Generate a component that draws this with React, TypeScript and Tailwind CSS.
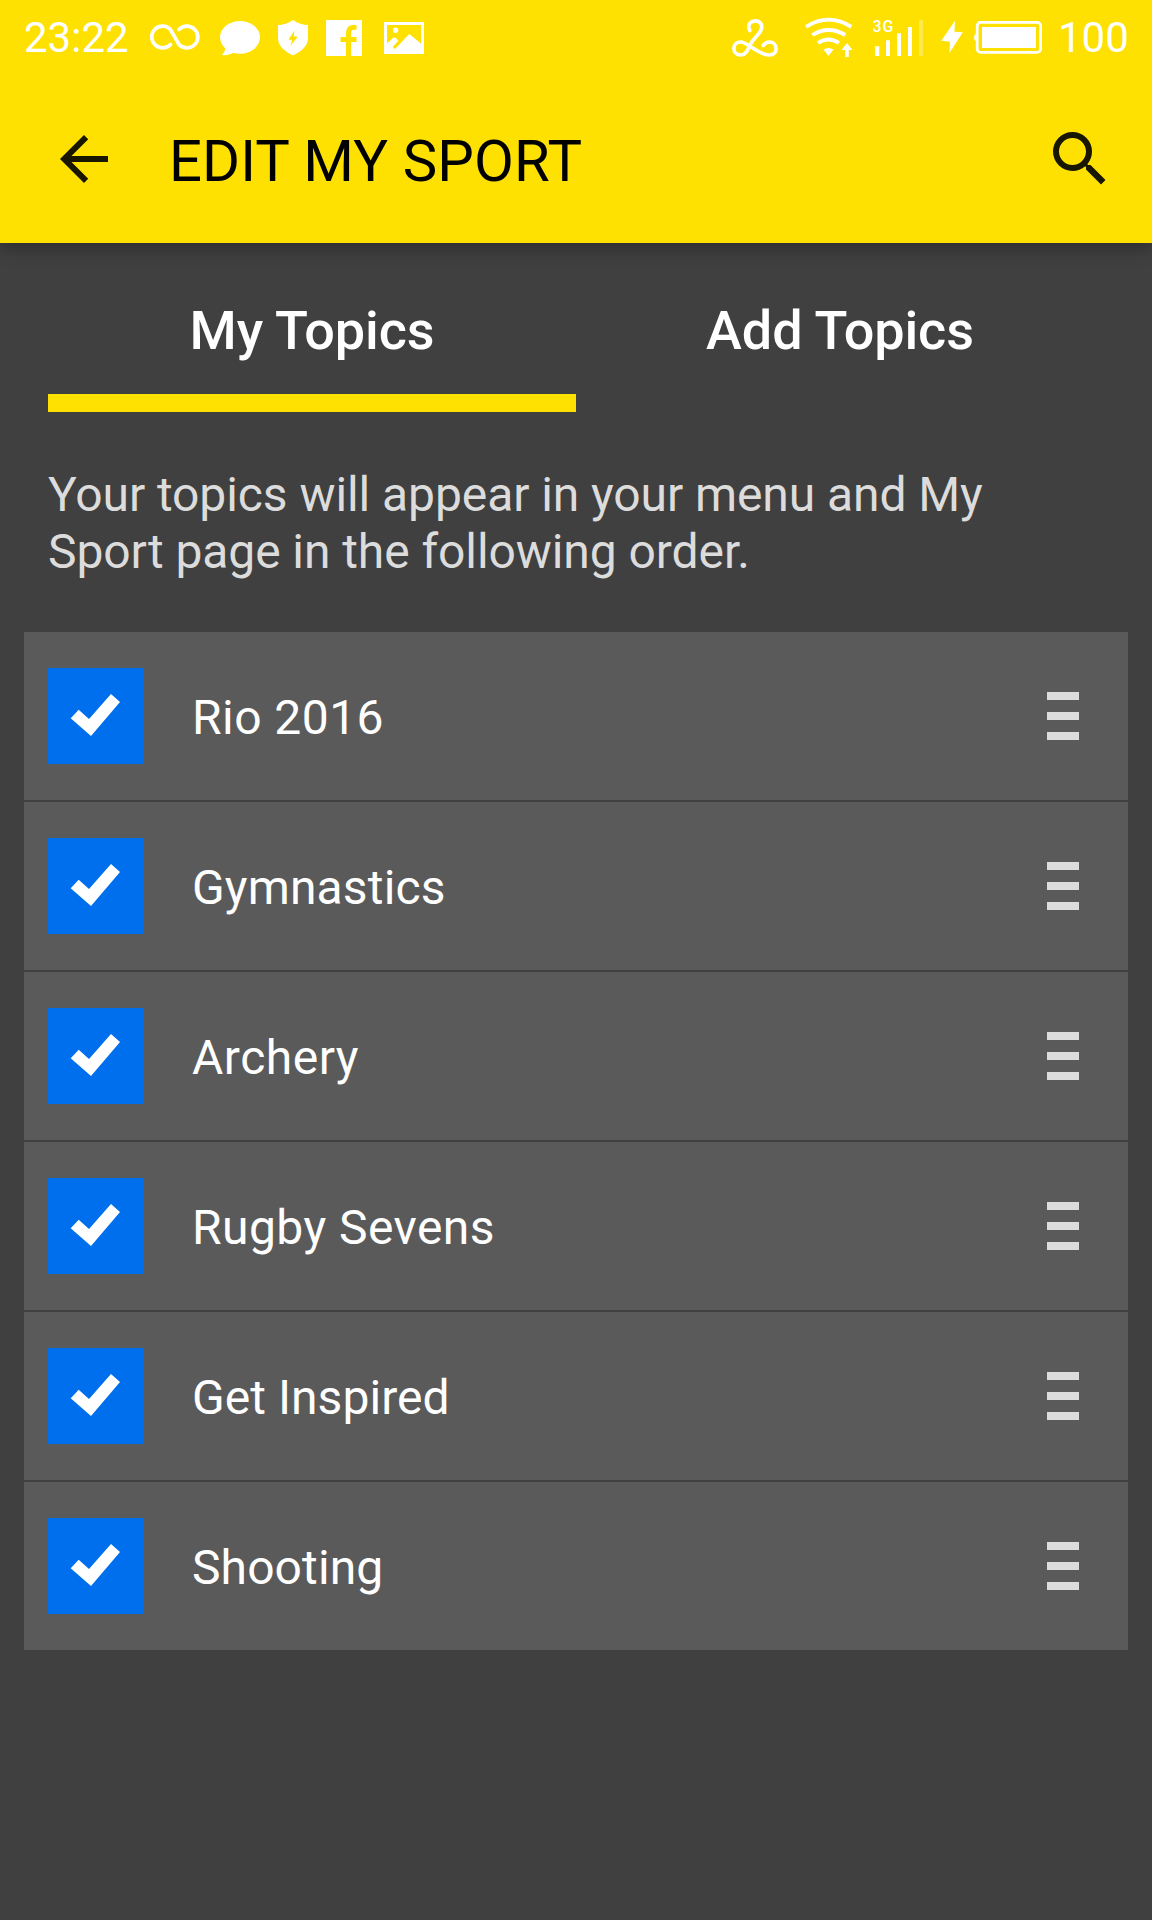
import React from 'react';

const topics = [
  { name: 'Rio 2016', tracking: 'tracking-[0.45px]' },
  { name: 'Gymnastics', tracking: 'tracking-[0.15px]' },
  { name: 'Archery', tracking: 'tracking-[0.5px]' },
  { name: 'Rugby Sevens', tracking: 'tracking-[0.45px]' },
  { name: 'Get Inspired', tracking: 'tracking-[0.05px]' },
  { name: 'Shooting', tracking: 'tracking-[0.1px]' },
];

const StatusBar: React.FC = () => {
  return (
    <div className="flex h-[76px] items-center justify-between px-6 text-white">
      <div className="flex items-center">
        <span className="w-[126px] text-[42px] leading-[74px]">23:22</span>
        <svg width="50" height="76" viewBox="0 0 50 76" fill="none" stroke="currentColor" strokeWidth="3.7" strokeLinecap="round">
          <path d="M20.5 44.5A10.9 10.9 0 1 1 20 29L29 44.5A10.9 10.9 0 1 0 29 29.5" />
        </svg>
        <svg className="ml-5" width="40" height="76" viewBox="0 0 40 76" fill="currentColor">
          <ellipse cx="20" cy="37.3" rx="20" ry="16.4" />
          <path d="M5 46C6 50 4 53 1.5 55C7 55.5 11 54.5 15 52z" />
        </svg>
        <svg className="ml-[18px]" width="30" height="76" viewBox="0 0 30 76">
          <path fill="currentColor" d="M15 20C10 23.5 5 25 0 25V38C0 47 8 52 15 55.5C22 52 30 47 30 38V25C25 25 20 23.5 15 20z" />
          <path className="fill-[#fee100]" d="M16.5 30.5L10.5 39.5L14.3 40L12.3 46L19.7 36.7L15.7 36.3z" />
        </svg>
        <svg className="ml-[18px]" width="36" height="76" viewBox="0 0 36 76">
          <rect y="20" width="36" height="36" rx="1" fill="currentColor" />
          <path className="fill-[#fee100]" d="M20 56V42H14.5V37H20V34C20 28 22.5 25 27.5 25H30.5V29.7H28C25.5 29.7 25 31 25 33.5V37H30.5V42H25V56z" />
        </svg>
        <svg className="ml-[22px]" width="40" height="76" viewBox="0 0 40 76" fill="currentColor">
          <path fillRule="evenodd" d="M0 22H40V54H0zM3 25V43.5L9 38C10.5 37 12 38 13 39L14.3 41L8.7 47L11 49L25.3 34L37 43.5V25z" />
          <circle cx="11.6" cy="30.2" r="2.7" />
        </svg>
      </div>
      <div className="flex items-center">
        <svg width="46" height="76" viewBox="0 0 46 76" fill="none" stroke="currentColor" strokeWidth="3.7" strokeLinecap="round">
          <path d="M17.8 30.5C15 25 18.5 20.8 23.5 20.8C28.5 20.8 31 25.5 29 30C27 35 21.5 38 18 45C15.5 50.5 13.5 55 8.5 55C4.5 55 1.9 52 1.9 48.5C1.9 44 5 42 8.5 42C16 42 26 55 37.5 55C42 55 44.1 52 44.1 48.5C44.1 44.5 41 42 37.5 42C34.5 42 32.5 43.3 31.3 45.5" />
        </svg>
        <svg className="ml-[27px]" width="48" height="76" viewBox="0 0 48 76" fill="none" stroke="currentColor" strokeWidth="3.8">
          <path d="M1 26.8Q23.5 12.5 46.3 26.8" />
          <path d="M7.3 35Q23.5 25 40.3 35" />
          <path d="M13 43Q23.5 36 34 43" />
          <path fill="currentColor" stroke="none" d="M18.5 49.5Q23.5 46.5 28.5 49.5L23.5 56z" />
          <path fill="currentColor" stroke="none" d="M42 43L47.5 50H43.8V57H40.2V50H36.5z" />
        </svg>
        <svg className="ml-5" width="50" height="76" viewBox="0 0 50 76" fill="currentColor">
          <text x="-0.5" y="31.7" fontSize="16" fontWeight="500" textLength="21">3G</text>
          <path d="M2 46.3H6.3V56H2zM13 40.3H17V56H13zM24 33.3H28V56H24zM35 27H39V56H35z" />
          <path opacity="0.3" d="M46 20H50V56H46z" />
        </svg>
        <svg className="ml-[17px]" width="24" height="76" viewBox="0 0 24 76" fill="currentColor">
          <path d="M15 20.7L1.3 40.7L10 41.7L9.5 53L22.8 32.3L14.5 31.7z" />
        </svg>
        <svg className="ml-2.5" width="68" height="76" viewBox="0 0 68 76" fill="currentColor">
          <rect x="3.2" y="22.4" width="63.4" height="30" rx="3.5" fill="none" stroke="currentColor" strokeWidth="2.8" />
          <rect x="8" y="27" width="54" height="21" />
          <path d="M2 34Q0 34.5 0 37.5T2 41z" />
        </svg>
        <span className="w-[86px] pl-4 text-[42px] leading-[74px]">100</span>
      </div>
    </div>
  );
};

const AppBar: React.FC = () => {
  return (
    <div className="flex h-[167px] items-center px-[36px] pb-[1px] text-black/90">
      <button className="ml-3" aria-label="Back">
        <svg className="block" width="72" height="72" viewBox="0 0 24 24" fill="currentColor">
          <path d="M20 11H7.83l5.59-5.59L12 4l-8 8 8 8 1.41-1.41L7.83 13H20v-2z" />
        </svg>
      </button>
      <h1 className="ml-[49px] flex-1 pt-1 text-[58px] leading-[68px] tracking-[0.1px] text-black">EDIT MY SPORT</h1>
      <button aria-label="Search">
        <svg className="block" width="72" height="72" viewBox="0 0 24 24" fill="currentColor">
          <path d="M15.5 14h-.79l-.28-.27A6.471 6.471 0 0 0 16 9.5 6.5 6.5 0 1 0 9.5 16c1.61 0 3.09-.59 4.23-1.57l.27.28v.79l5 4.99L20.49 19l-4.99-5zm-6 0C7.01 14 5 11.99 5 9.5S7.01 5 9.5 5 14 7.01 14 9.5 11.99 14 9.5 14z" />
        </svg>
      </button>
    </div>
  );
};

interface TopicRowProps {
  name: string;
  tracking: string;
}

const TopicRow: React.FC<TopicRowProps> = ({ name, tracking }) => {
  return (
    <li className="flex h-[168px] items-center bg-[#5a5a5a] pl-6 pr-[49px]">
      <svg className="bg-[#006fee]" width="96" height="96" viewBox="0 0 96 96" fill="white">
        <path d="M22.7 50.3L30.7 41.7L41 51L63 26L72 34L43 68z" />
      </svg>
      <span className={`ml-12 flex-1 pt-[3px] text-[48px] leading-[56px] text-white ${tracking}`}>{name}</span>
      <div className="flex w-8 flex-col gap-3">
        <div className="h-2 bg-[#dcdcdc]"></div>
        <div className="h-2 bg-[#dcdcdc]"></div>
        <div className="h-2 bg-[#dcdcdc]"></div>
      </div>
    </li>
  );
};

export default function App() {
  return (
    <div className="h-[1920px] w-[1152px] overflow-hidden bg-[#404040] font-['Roboto',sans-serif]">
      <header className="h-[243px] bg-[#fee100] shadow-[0_6px_16px_rgba(0,0,0,0.3)]">
        <StatusBar />
        <AppBar />
      </header>

      <nav className="mx-12 grid h-[169px] grid-cols-2 text-center text-[54px] font-medium leading-[64px] tracking-[-0.1px] text-white">
        <div className="border-b-[18px] border-[#fee100] pt-[56px]">My Topics</div>
        <div className="pt-[56px]">Add Topics</div>
      </nav>

      <p className="mx-12 h-[220px] pt-[54px] text-[48px] leading-[57px] tracking-[-0.08px] text-[#dcdcdc]">
        Your topics will appear in your menu and My Sport page in the following order.
      </p>

      <ul className="mx-6 flex flex-col gap-0.5">
        {topics.map((topic) => (
          <TopicRow key={topic.name} name={topic.name} tracking={topic.tracking} />
        ))}
      </ul>
    </div>
  );
}
